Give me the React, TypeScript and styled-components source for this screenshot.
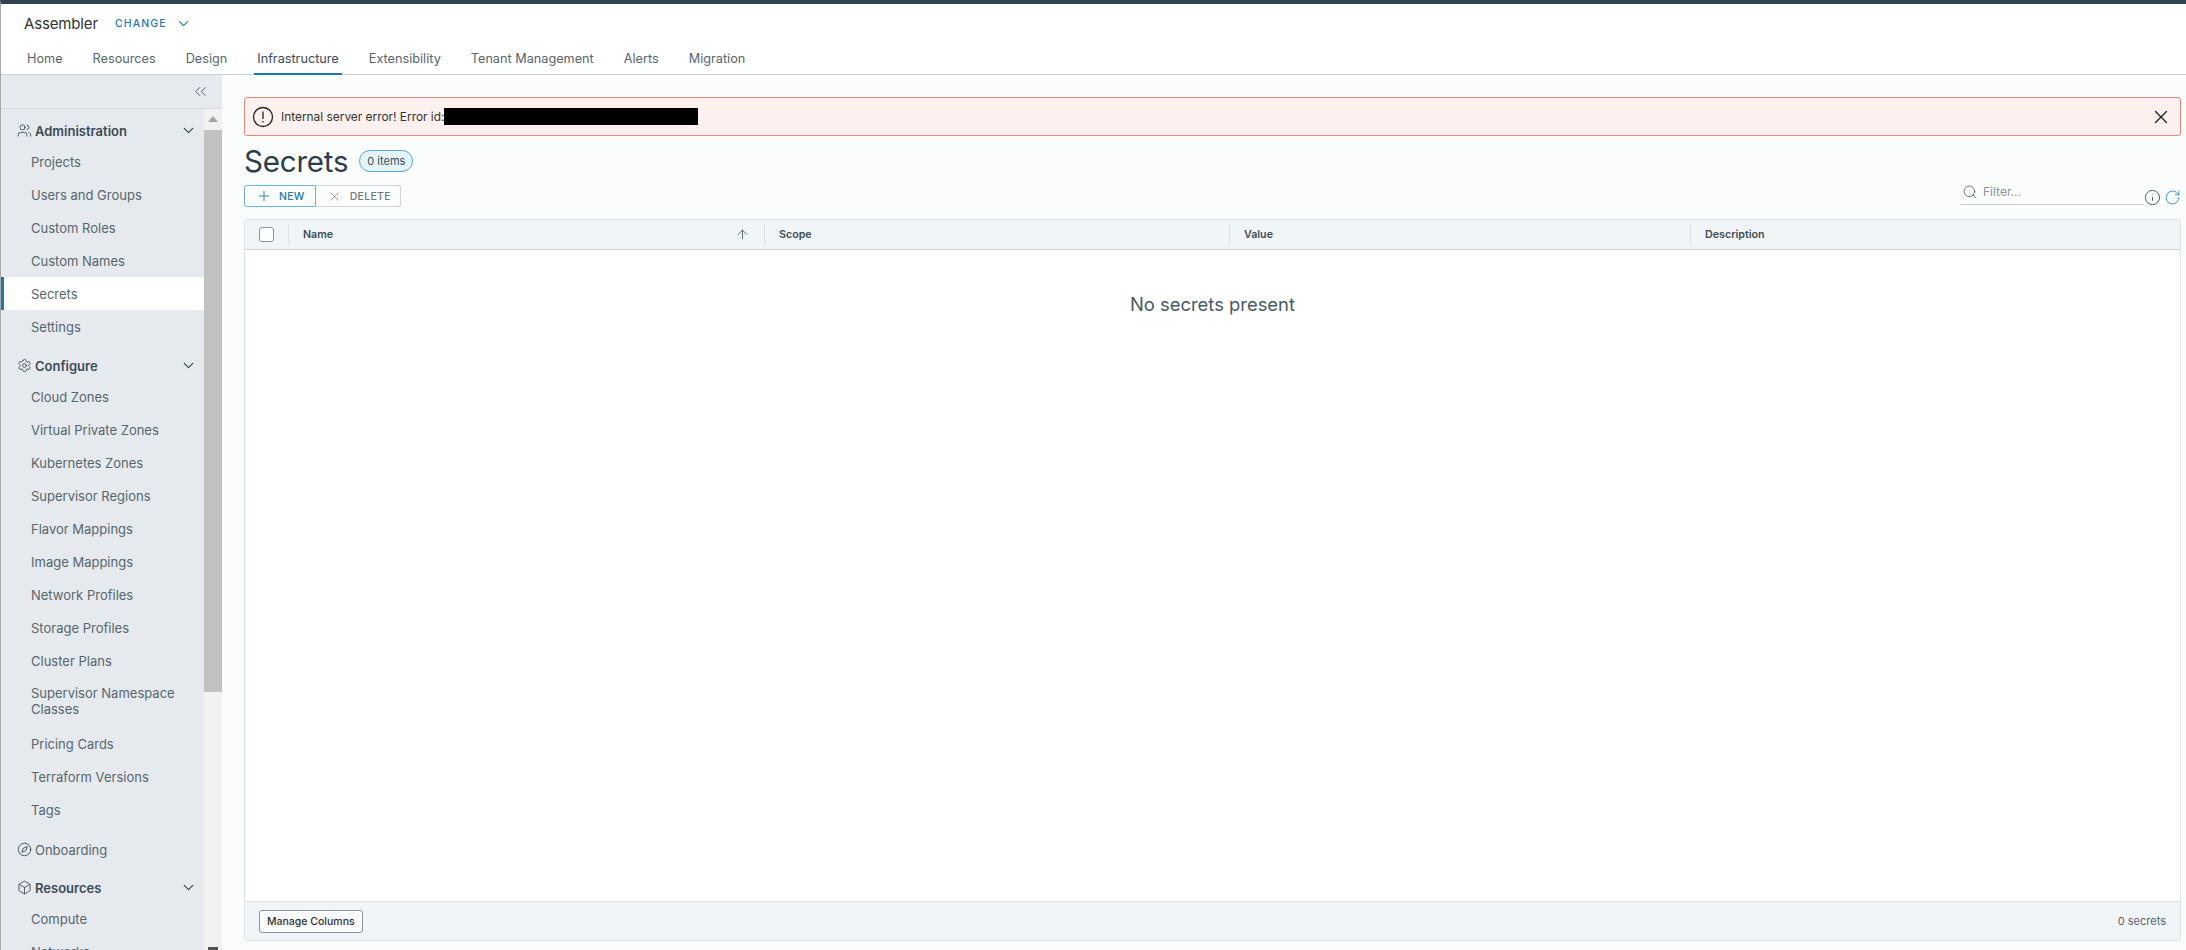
import React from 'react';
import styled, { createGlobalStyle } from 'styled-components';
import { ArrowUp, ChevronDown, ChevronsLeft, Info, Plus, RotateCw, Search, X, Settings, Users, Box, Compass } from 'lucide-react';

const GlobalStyle = createGlobalStyle`
  html, body, #root {
    margin: 0;
    height: 100%;
    overflow: hidden;
  }
  body {
    font-family: Inter, "Noto Sans", "Liberation Sans", sans-serif;
    color: #4a5a66;
    background: #fff;
  }
  * { box-sizing: border-box; }
`;

const Page = styled.div`
  display: flex;
  flex-direction: column;
  height: 950px;
  border-left: 1px solid #a8a8a8;
  border-top: 4px solid #314351;
`;

const Header = styled.div`
  display: flex;
  align-items: center;
  height: 38px;
  padding: 0 0 0 23px;
`;

const ProductName = styled.span`
  font-size: 15px;
  color: #333;
  letter-spacing: -0.15px;
`;

const ChangeLink = styled.span`
  margin-left: 17px;
  display: flex;
  align-items: center;
  gap: 8px;
  font-size: 10.5px;
  font-weight: 500;
  letter-spacing: 1.1px;
  color: #1f78a8;
`;

const TabBar = styled.nav`
  display: flex;
  height: 33px;
  padding-left: 23px;
  border-bottom: 1px solid #c8d0d6;
`;

const Tab = styled.a<{ $active?: boolean }>`
  padding: 9px 3px 0;
  margin-right: 24px;
  font-size: 12.7px;
  color: ${p => (p.$active ? '#3b4b57' : '#56666f')};
  border-bottom: 2px solid ${p => (p.$active ? '#1f78a8' : 'transparent')};
  height: 33px;
`;

const Body = styled.div`
  flex: 1;
  display: flex;
  min-height: 0;
`;

const Sidebar = styled.aside`
  width: 221px;
  flex: none;
  display: flex;
  flex-direction: column;
  background: #e6eaee;
  overflow: hidden;
`;

const CollapseRow = styled.div`
  height: 34px;
  flex: none;
  display: flex;
  align-items: center;
  justify-content: flex-end;
  padding-right: 12px;
  border-bottom: 1px solid #d4dae0;
  color: #4a5a66;
`;

const SideScroll = styled.div`
  flex: 1;
  min-height: 0;
  display: flex;
`;

const NavList = styled.div`
  width: 203px;
  flex: none;
  padding-top: 5px;
  overflow: hidden;
`;

const ScrollTrack = styled.div`
  flex: 1;
  background: #f1f1f1;
  display: flex;
  flex-direction: column;
  align-items: center;
`;

const ScrollArrow = styled.div`
  width: 0;
  height: 0;
  margin-top: 7px;
  border-left: 5px solid transparent;
  border-right: 5px solid transparent;
  border-bottom: 6px solid #a3a3a3;
  margin-bottom: 8px;
`;

const ScrollThumb = styled.div`
  width: 100%;
  height: 562px;
  background: #c1c1c1;
`;

const ScrollArrowDown = styled.div`
  width: 10px;
  height: 3px;
  margin-top: auto;
  background: #505050;
`;

const GroupHeader = styled.div<{ $plain?: boolean; $gap?: number }>`
  display: flex;
  align-items: center;
  height: 31px;
  margin-top: ${p => p.$gap ?? 0}px;
  padding: 2px 7px 0 16px;
  font-size: 13px;
  font-weight: ${p => (p.$plain ? 400 : 600)};
  color: ${p => (p.$plain ? '#56666f' : '#3b4b57')};
  svg.lead {
    margin-right: 3px;
    flex: none;
    color: #3b4b57;
  }
  svg.chev {
    margin-left: auto;
    color: #2f3f4a;
  }
`;

const NavItem = styled.div<{ $active?: boolean }>`
  display: flex;
  align-items: center;
  min-height: 33px;
  padding: 0 12px 0 ${p => (p.$active ? 27 : 30)}px;
  font-size: 13px;
  line-height: 16px;
  color: #56666f;
  background: ${p => (p.$active ? '#fff' : 'transparent')};
  border-left: ${p => (p.$active ? '3px solid #1f78a8' : 'none')};
`;

const WrappedItem = styled(NavItem)`
  padding-top: 8px;
  padding-bottom: 10px;
`;

const Main = styled.main`
  flex: 1;
  min-width: 0;
  display: flex;
  flex-direction: column;
  padding: 22px 5px 9px 22px;
  background: #fbfdfd;
`;

const Alert = styled.div`
  display: flex;
  align-items: center;
  height: 39px;
  flex: none;
  padding: 0 8px 0 7px;
  background: #fdf1ef;
  border: 1px solid #e8887c;
  border-radius: 3px;
  font-size: 11.9px;
  color: #333;
`;

const AlertText = styled.span`
  margin-left: 7px;
`;

const Redacted = styled.span`
  display: inline-block;
  width: 254px;
  height: 17px;
  background: #000;
`;

const AlertClose = styled.span`
  margin-left: auto;
  display: flex;
  color: #222;
`;

const TitleRow = styled.div`
  display: flex;
  align-items: center;
  gap: 11px;
  height: 49px;
  flex: none;
`;

const Title = styled.h1`
  margin: 0;
  font-size: 29.5px;
  font-weight: 400;
  color: #2c3d49;
  letter-spacing: -0.2px;
`;

const CountBadge = styled.span`
  display: flex;
  align-items: center;
  height: 22px;
  padding: 0 7px;
  border: 1px solid #5aa8d0;
  border-radius: 11px;
  background: #e5f5fc;
  font-size: 11px;
  color: #3b4b57;
`;

const ActionRow = styled.div`
  display: flex;
  align-items: flex-end;
  flex: none;
  height: 22px;
  margin-bottom: 12px;
`;

const ActionButton = styled.button<{ $primary?: boolean }>`
  display: flex;
  align-items: center;
  height: 22px;
  padding: 0 ${p => (p.$primary ? 10 : 9)}px 0 11px;
  gap: ${p => (p.$primary ? 7 : 8)}px;
  font-family: inherit;
  font-size: 10.5px;
  font-weight: 500;
  letter-spacing: 0.3px;
  background: transparent;
  color: ${p => (p.$primary ? '#1f78a8' : '#6d7a83')};
  border: 1px solid ${p => (p.$primary ? '#6fb1d4' : '#ccd3d8')};
  border-left-width: ${p => (p.$primary ? 1 : 0)}px;
  border-radius: ${p => (p.$primary ? '3px 0 0 3px' : '0 3px 3px 0')};
  svg { color: ${p => (p.$primary ? '#1f78a8' : '#7d8990')}; }
`;

const FilterBox = styled.div`
  margin-left: auto;
  display: flex;
  align-items: flex-end;
  margin-bottom: 1px;
`;

const FilterField = styled.div`
  display: flex;
  align-items: center;
  gap: 5px;
  width: 184px;
  height: 22px;
  padding-left: 2px;
  padding-bottom: 4px;
  margin-bottom: 1px;
  border-bottom: 1px solid #c6cbd0;
  font-size: 12px;
  color: #8a949c;
  svg { color: #5d6d78; }
`;

const FilterIcon = styled.span<{ $blue?: boolean }>`
  display: flex;
  margin-left: ${p => (p.$blue ? 3 : 0)}px;
  color: ${p => (p.$blue ? '#3d9ad0' : '#4a5a66')};
`;

const Grid = styled.div`
  flex: 1;
  min-height: 0;
  display: flex;
  flex-direction: column;
  background: #fff;
  border: 1px solid #dde3e8;
  border-radius: 3px;
`;

const GridHeader = styled.div`
  display: grid;
  grid-template-columns: 43px 476px 465px 461px 1fr;
  align-items: center;
  height: 30px;
  flex: none;
  background: #f1f5f8;
  border-bottom: 1px solid #ccd4da;
`;

const HeaderCell = styled.div`
  display: flex;
  align-items: center;
  justify-content: space-between;
  height: 22px;
  padding: 0 14px;
  border-left: 1px solid #dde3e8;
  font-size: 10.7px;
  font-weight: 600;
  color: #3f4d57;
  &:first-child {
    border-left: none;
    justify-content: center;
    padding: 0;
  }
  svg { color: #3f4d57; }
`;

const CheckBox = styled.span`
  width: 15px;
  height: 15px;
  border: 1px solid #8b969e;
  border-radius: 3px;
  background: #fff;
`;

const EmptyMessage = styled.div`
  flex: 1;
  padding-top: 43px;
  text-align: center;
  font-size: 18.4px;
  color: #4a5a66;
`;

const GridFooter = styled.div`
  display: flex;
  align-items: center;
  justify-content: space-between;
  height: 39px;
  flex: none;
  padding: 0 14px;
  background: #f1f5f8;
  border-top: 1px solid #dde3e8;
  font-size: 11px;
  color: #56666f;
`;

const ManageButton = styled.button`
  height: 23px;
  padding: 0 7px;
  font-family: inherit;
  font-size: 10.5px;
  font-weight: 500;
  color: #333;
  background: #fafbfc;
  border: 1px solid #8b969e;
  border-radius: 3px;
`;

const tabs = ['Home', 'Resources', 'Design', 'Infrastructure', 'Extensibility', 'Tenant Management', 'Alerts', 'Migration'];
const adminItems = ['Projects', 'Users and Groups', 'Custom Roles', 'Custom Names', 'Secrets', 'Settings'];
const configureItems = [
  'Cloud Zones',
  'Virtual Private Zones',
  'Kubernetes Zones',
  'Supervisor Regions',
  'Flavor Mappings',
  'Image Mappings',
  'Network Profiles',
  'Storage Profiles',
  'Cluster Plans',
];
const configureRest = ['Pricing Cards', 'Terraform Versions', 'Tags'];

const App: React.FC = () => {
  return (
    <>
      <GlobalStyle />
      <Page>
        <Header>
          <ProductName>Assembler</ProductName>
          <ChangeLink>
            CHANGE
            <ChevronDown size={17} strokeWidth={1.6} />
          </ChangeLink>
        </Header>
        <TabBar>
          {tabs.map(t => (
            <Tab key={t} $active={t === 'Infrastructure'}>
              {t}
            </Tab>
          ))}
        </TabBar>
        <Body>
          <Sidebar>
            <CollapseRow>
              <ChevronsLeft size={19} strokeWidth={1.2} />
            </CollapseRow>
            <SideScroll>
              <NavList>
                <GroupHeader>
                  <Users className="lead" size={15} strokeWidth={1.4} />
                  Administration
                  <ChevronDown className="chev" size={17} strokeWidth={1.6} />
                </GroupHeader>
                {adminItems.map(i => (
                  <NavItem key={i} $active={i === 'Secrets'}>
                    {i}
                  </NavItem>
                ))}
                <GroupHeader $gap={6}>
                  <Settings className="lead" size={15} strokeWidth={1.4} />
                  Configure
                  <ChevronDown className="chev" size={17} strokeWidth={1.6} />
                </GroupHeader>
                {configureItems.map(i => (
                  <NavItem key={i}>{i}</NavItem>
                ))}
                <WrappedItem>Supervisor Namespace Classes</WrappedItem>
                {configureRest.map(i => (
                  <NavItem key={i}>{i}</NavItem>
                ))}
                <GroupHeader $plain $gap={7}>
                  <Compass className="lead" size={15} strokeWidth={1.4} />
                  Onboarding
                </GroupHeader>
                <GroupHeader $gap={7}>
                  <Box className="lead" size={15} strokeWidth={1.4} />
                  Resources
                  <ChevronDown className="chev" size={17} strokeWidth={1.6} />
                </GroupHeader>
                <NavItem>Compute</NavItem>
                <NavItem>Networks</NavItem>
              </NavList>
              <ScrollTrack>
                <ScrollArrow />
                <ScrollThumb />
                <ScrollArrowDown />
              </ScrollTrack>
            </SideScroll>
          </Sidebar>
          <Main>
            <Alert>
              <svg width="22" height="22" viewBox="0 0 22 22" fill="none" stroke="#222" strokeWidth="1.3">
                <circle cx="11" cy="11" r="9.5" />
                <path d="M11 5.5v7.5" />
                <path d="M11 15v1.5" />
              </svg>
              <AlertText>Internal server error! Error id:</AlertText>
              <Redacted />
              <AlertClose>
                <X size={22} strokeWidth={1.5} />
              </AlertClose>
            </Alert>
            <TitleRow>
              <Title>Secrets</Title>
              <CountBadge>0 items</CountBadge>
            </TitleRow>
            <ActionRow>
              <ActionButton $primary>
                <Plus size={16} strokeWidth={1.3} />
                NEW
              </ActionButton>
              <ActionButton>
                <X size={15} strokeWidth={1.2} />
                DELETE
              </ActionButton>
              <FilterBox>
                <FilterField>
                  <Search size={16} strokeWidth={1.4} />
                  Filter...
                </FilterField>
                <FilterIcon>
                  <Info size={17} strokeWidth={1.4} />
                </FilterIcon>
                <FilterIcon $blue>
                  <RotateCw size={17} strokeWidth={1.4} />
                </FilterIcon>
              </FilterBox>
            </ActionRow>
            <Grid>
              <GridHeader>
                <HeaderCell>
                  <CheckBox />
                </HeaderCell>
                <HeaderCell>
                  Name
                  <ArrowUp size={15} strokeWidth={1.3} />
                </HeaderCell>
                <HeaderCell>Scope</HeaderCell>
                <HeaderCell>Value</HeaderCell>
                <HeaderCell>Description</HeaderCell>
              </GridHeader>
              <EmptyMessage>No secrets present</EmptyMessage>
              <GridFooter>
                <ManageButton>Manage Columns</ManageButton>
                0 secrets
              </GridFooter>
            </Grid>
          </Main>
        </Body>
      </Page>
    </>
  );
};

export default App;
